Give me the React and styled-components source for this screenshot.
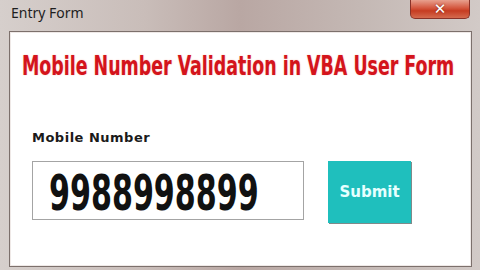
import React from "react";
import styled, { createGlobalStyle } from "styled-components";

const GlobalStyle = createGlobalStyle`
  html, body {
    margin: 0;
    padding: 0;
  }
  body {
    width: 480px;
    height: 270px;
    overflow: hidden;
  }
`;

const Window = styled.div`
  width: 480px;
  height: 270px;
  box-sizing: border-box;
  display: flex;
  flex-direction: column;
  background: linear-gradient(
    90deg,
    #d6cfcc 0%,
    #c9bdb9 30%,
    #b9a7a3 50%,
    #c4b8b4 75%,
    #d2cac7 100%
  );
  padding: 0 8px 3px 9px;
`;

const TitleBar = styled.div`
  height: 31px;
  flex: none;
  display: flex;
  align-items: flex-start;
  justify-content: space-between;
`;

const Title = styled.span`
  font-family: "Noto Sans", "Open Sans", sans-serif;
  font-size: 14px;
  color: #1e1e1e;
  margin: 3px 0 0 2px;
`;

const CloseButton = styled.div`
  width: 60px;
  height: 19px;
  margin-right: 2px;
  box-sizing: border-box;
  border: 1px solid #8a3228;
  border-top: none;
  border-radius: 0 0 5px 5px;
  background: linear-gradient(180deg, #e8a08e 0%, #d4563e 45%, #c63c22 60%, #d46a4e 100%);
  display: flex;
  align-items: center;
  justify-content: center;
  color: #fff;
  font-family: "DejaVu Sans", sans-serif;
  font-weight: bold;
  font-size: 15px;
  line-height: 1;
  text-shadow: 0 0 2px #7a2010;
`;

const Client = styled.div`
  flex: 1;
  background: #fff;
  border: 1px solid #7c706c;
  box-shadow: inset 0 0 0 1px #efe9e7;
  display: flex;
  flex-direction: column;
`;

const Heading = styled.h1`
  margin: 18px 0 0 12px;
  font-family: "DejaVu Sans Condensed", "DejaVu Sans", sans-serif;
  font-stretch: condensed;
  font-weight: bold;
  font-size: 27px;
  line-height: 32px;
  color: #d4141c;
  white-space: nowrap;
  transform: scaleX(0.717);
  transform-origin: left center;
  text-shadow: 0 0 2px #f4c0b8;
`;

const Label = styled.label`
  margin: 48px 0 0 22px;
  font-family: "DejaVu Sans", sans-serif;
  font-weight: bold;
  font-size: 13px;
  letter-spacing: 0.5px;
  color: #1a1a1a;
`;

const FieldRow = styled.div`
  margin: 16px 0 0 22px;
  display: flex;
  align-items: flex-start;
  gap: 24px;
`;

const NumberBox = styled.div`
  width: 272px;
  height: 59px;
  box-sizing: border-box;
  border: 1px solid #a4a4a4;
  background: #fff;
  display: flex;
  align-items: center;
  padding-left: 16px;
`;

const NumberText = styled.span`
  font-family: "DejaVu Sans Condensed", "DejaVu Sans", sans-serif;
  font-stretch: condensed;
  font-weight: bold;
  font-size: 33.5px;
  line-height: 1;
  color: #111;
  white-space: nowrap;
  display: inline-block;
  transform: scaleY(1.47);
  transform-origin: center;
  margin-top: 6px;
`;

const SubmitButton = styled.button`
  width: 83px;
  height: 62px;
  box-sizing: border-box;
  border: none;
  background: #1fbfbd;
  box-shadow: 1px 1px 0 #7f8a8a;
  color: #e6ffff;
  font-family: "DejaVu Sans", sans-serif;
  font-weight: bold;
  font-size: 15px;
  padding: 0;
  cursor: pointer;
`;

export default function App() {
  return (
    <>
      <GlobalStyle />
      <Window>
        <TitleBar>
          <Title>Entry Form</Title>
          <CloseButton>✕</CloseButton>
        </TitleBar>
        <Client>
          <Heading>Mobile Number Validation in VBA User Form</Heading>
          <Label>Mobile Number</Label>
          <FieldRow>
            <NumberBox>
              <NumberText>9988998899</NumberText>
            </NumberBox>
            <SubmitButton>Submit</SubmitButton>
          </FieldRow>
        </Client>
      </Window>
    </>
  );
}
